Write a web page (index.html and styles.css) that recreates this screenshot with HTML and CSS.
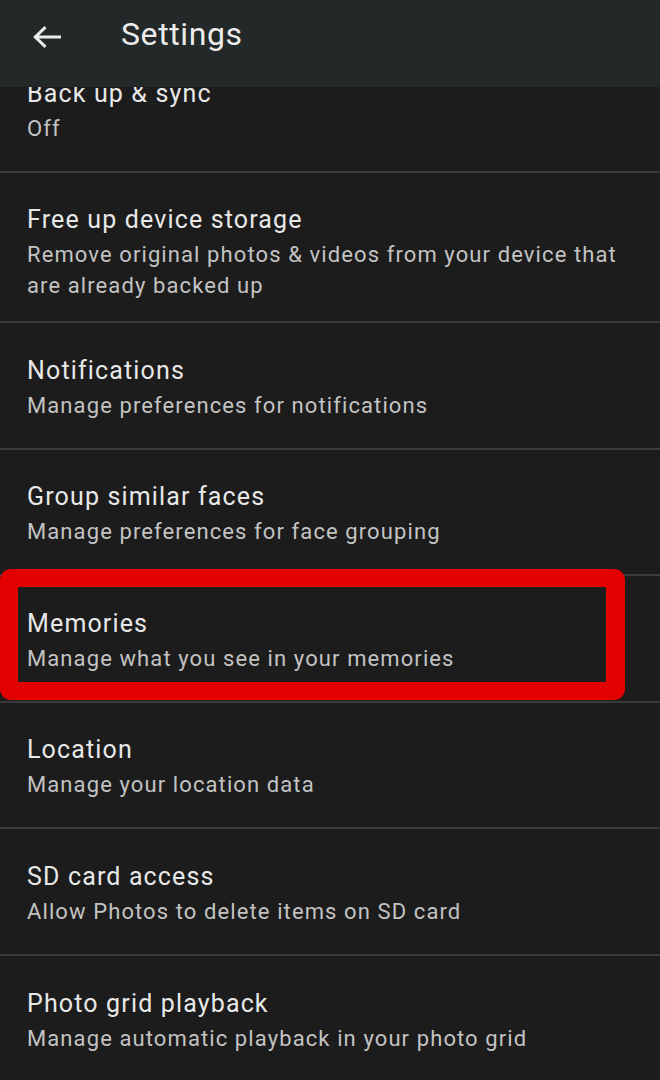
FILE: index.html
```html
<!DOCTYPE html>
<html>
<head>
<meta charset="utf-8">
<link rel="stylesheet" href="styles.css">
</head>
<body>
<div class="screen">
  <header class="appbar">
    <svg class="back" width="28" height="22" viewBox="0 0 28 22">
      <path d="M2.5 11H28M12.5 1.2L2.3 11L12.5 20.8" fill="none" stroke="#ececec" stroke-width="3"/>
    </svg>
    <h1 class="title">Settings</h1>
  </header>
  <main class="viewport">
    <div class="list">
      <div class="row first">
        <div class="row-title">Back up &amp; sync</div>
        <div class="row-sub">Off</div>
      </div>
      <div class="row">
        <div class="row-title">Free up device storage</div>
        <div class="row-sub">Remove original photos &amp; videos from your device that are already backed up</div>
      </div>
      <div class="row">
        <div class="row-title">Notifications</div>
        <div class="row-sub">Manage preferences for notifications</div>
      </div>
      <div class="row">
        <div class="row-title">Group similar faces</div>
        <div class="row-sub">Manage preferences for face grouping</div>
      </div>
      <div class="row highlighted">
        <div class="row-title">Memories</div>
        <div class="row-sub">Manage what you see in your memories</div>
        <div class="annotation"></div>
      </div>
      <div class="row">
        <div class="row-title">Location</div>
        <div class="row-sub">Manage your location data</div>
      </div>
      <div class="row">
        <div class="row-title">SD card access</div>
        <div class="row-sub">Allow Photos to delete items on SD card</div>
      </div>
      <div class="row">
        <div class="row-title">Photo grid playback</div>
        <div class="row-sub">Manage automatic playback in your photo grid</div>
      </div>
    </div>
  </main>
</div>
</body>
</html>
```
FILE: styles.css
```css
* { box-sizing: border-box; }
html, body {
  margin: 0;
  padding: 0;
  background: #1c1c1c;
}
body {
  font-family: Roboto, "Noto Sans", sans-serif;
  width: 660px;
  height: 1080px;
  overflow: hidden;
}
.screen {
  display: flex;
  flex-direction: column;
  height: 1080px;
}
.appbar {
  position: relative;
  z-index: 1;
  flex: 0 0 87px;
  height: 87px;
  background: #232928;
  display: flex;
  align-items: flex-start;
  padding: 14px 0 0 33px;
}
.back {
  display: block;
  margin-top: 12px;
  flex: 0 0 auto;
}
.title {
  margin: 0 0 0 60px;
  font-size: 32px;
  line-height: 40px;
  font-weight: 400;
  color: #ececec;
  letter-spacing: 0.6px;
}
.viewport {
  flex: 1 1 auto;
  overflow: hidden;
}
.list {
  margin-top: -43px;
}
.row {
  position: relative;
  min-height: 126.6px;
  border-top: 2px solid #3b3b3b;
  padding: 30.5px 20px 20px 27px;
  display: flex;
  flex-direction: column;
  gap: 2px;
}
.row.first {
  border-top-color: transparent;
}
.row-title {
  font-size: 25px;
  line-height: 34px;
  color: #e8e8e8;
  letter-spacing: 1.15px;
}
.row-sub {
  font-size: 22px;
  line-height: 31px;
  color: #c3c3c3;
  letter-spacing: 1.1px;
}
.annotation {
  position: absolute;
  left: 0;
  top: -7px;
  width: 625px;
  height: 131px;
  border: 18px solid #e30000;
  border-right-width: 19px;
  border-radius: 11px;
  pointer-events: none;
}
```
